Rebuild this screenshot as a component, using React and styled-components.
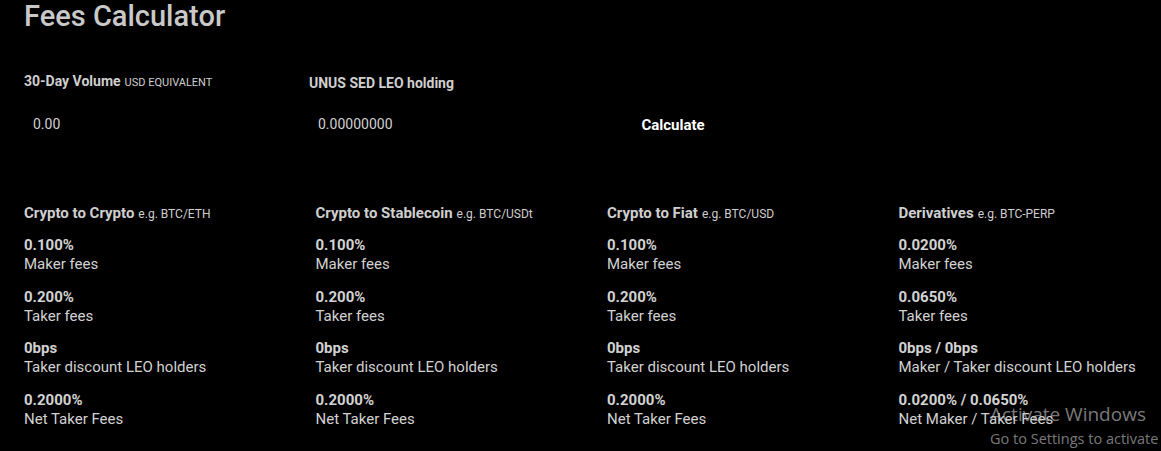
import { useState } from "react";
import styled, { createGlobalStyle } from "styled-components";

const GlobalStyle = createGlobalStyle`
  html, body {
    margin: 0;
    padding: 0;
    background: #000;
  }
  body {
    font-family: Roboto, "Liberation Sans", Arial, sans-serif;
    color: #d0d0d0;
    overflow: hidden;
  }
`;

const Page = styled.div`
  position: relative;
  width: 1161px;
  height: 451px;
  padding-left: 24px;
  box-sizing: border-box;
  overflow: hidden;
`;

const Title = styled.h1`
  margin: 0;
  font-size: 29px;
  line-height: 32px;
  font-weight: 500;
  color: #c9c9c9;
`;

const Form = styled.div`
  display: flex;
  align-items: flex-end;
  margin-top: 41px;
`;

const Field = styled.div`
  width: 285px;
  display: flex;
  flex-direction: column;
  gap: 18px;
`;

const Label = styled.label`
  font-size: 14px;
  line-height: 16px;
  font-weight: 700;
  color: #cfcfcf;
`;

const Small = styled.span`
  font-size: ${(p) => p.$size || 11}px;
  font-weight: 400;
  margin-left: 4px;
`;

const Input = styled.input`
  height: 30px;
  width: 240px;
  padding: 0 0 0 9px;
  border: none;
  outline: none;
  background: transparent;
  color: #d0d0d0;
  font-family: inherit;
  font-size: 14px;
`;

const CalcButton = styled.button`
  width: 158px;
  height: 30px;
  margin-bottom: -1px;
  padding: 0;
  border: none;
  background: transparent;
  color: #fff;
  font-family: inherit;
  font-size: 15px;
  font-weight: 700;
  cursor: pointer;
`;

const Grid = styled.div`
  display: grid;
  grid-template-columns: repeat(4, 291.5px);
  margin-top: 66px;
`;

const Column = styled.div`
  display: flex;
  flex-direction: column;
`;

const Heading = styled.div`
  font-size: 15px;
  line-height: 16px;
  font-weight: 700;
  color: #cfcfcf;
  margin-bottom: 14px;
  white-space: nowrap;
`;

const Stat = styled.div`
  margin-bottom: 13.5px;
  white-space: nowrap;
`;

const Value = styled.div`
  font-size: 15px;
  line-height: 18px;
  font-weight: 700;
  color: #d2d2d2;
`;

const Caption = styled.div`
  font-size: 15px;
  line-height: 20px;
  color: #d2d2d2;
`;

const Watermark = styled.div`
  position: absolute;
  left: 990px;
  top: 402px;
  font-family: "Open Sans", "Noto Sans", sans-serif;
  color: rgba(200, 200, 200, 0.62);
  white-space: nowrap;
  pointer-events: none;
`;

const WmTitle = styled.div`
  font-size: 19px;
  line-height: 25px;
`;

const WmSub = styled.div`
  font-size: 14.5px;
  line-height: 18px;
  margin-top: 3px;
`;

const markets = [
  {
    name: "Crypto to Crypto",
    eg: "e.g. BTC/ETH",
    stats: [
      ["0.100%", "Maker fees"],
      ["0.200%", "Taker fees"],
      ["0bps", "Taker discount LEO holders"],
      ["0.2000%", "Net Taker Fees"],
    ],
  },
  {
    name: "Crypto to Stablecoin",
    eg: "e.g. BTC/USDt",
    stats: [
      ["0.100%", "Maker fees"],
      ["0.200%", "Taker fees"],
      ["0bps", "Taker discount LEO holders"],
      ["0.2000%", "Net Taker Fees"],
    ],
  },
  {
    name: "Crypto to Fiat",
    eg: "e.g. BTC/USD",
    stats: [
      ["0.100%", "Maker fees"],
      ["0.200%", "Taker fees"],
      ["0bps", "Taker discount LEO holders"],
      ["0.2000%", "Net Taker Fees"],
    ],
  },
  {
    name: "Derivatives",
    eg: "e.g. BTC-PERP",
    stats: [
      ["0.0200%", "Maker fees"],
      ["0.0650%", "Taker fees"],
      ["0bps / 0bps", "Maker / Taker discount LEO holders"],
      ["0.0200% / 0.0650%", "Net Maker / Taker Fees"],
    ],
  },
];

const App = () => {
  const [volume, setVolume] = useState("0.00");
  const [leo, setLeo] = useState("0.00000000");

  return (
    <>
      <GlobalStyle />
      <Page>
        <Title>Fees Calculator</Title>
        <Form>
          <Field>
            <Label>
              30-Day Volume<Small $size={11}>USD EQUIVALENT</Small>
            </Label>
            <Input value={volume} onChange={(e) => setVolume(e.target.value)} />
          </Field>
          <Field>
            <Label>UNUS SED LEO holding</Label>
            <Input value={leo} onChange={(e) => setLeo(e.target.value)} />
          </Field>
          <CalcButton>Calculate</CalcButton>
        </Form>
        <Grid>
          {markets.map((m) => (
            <Column key={m.name}>
              <Heading>
                {m.name}
                <Small $size={12}>{m.eg}</Small>
              </Heading>
              {m.stats.map(([v, c]) => (
                <Stat key={c}>
                  <Value>{v}</Value>
                  <Caption>{c}</Caption>
                </Stat>
              ))}
            </Column>
          ))}
        </Grid>
        <Watermark>
          <WmTitle>Activate Windows</WmTitle>
          <WmSub>Go to Settings to activate</WmSub>
        </Watermark>
      </Page>
    </>
  );
};

export default App;
